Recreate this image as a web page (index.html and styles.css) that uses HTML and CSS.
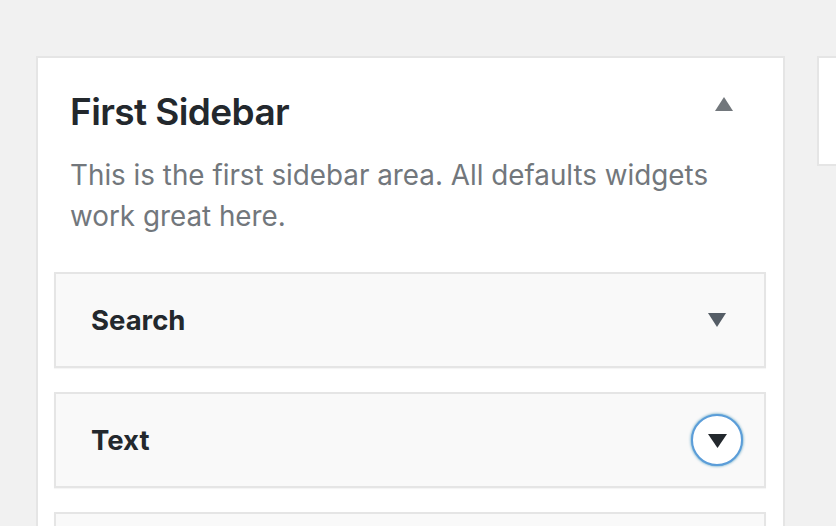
FILE: index.html
```html
<!DOCTYPE html>
<html lang="en">
<head>
    <meta charset="UTF-8">
    <meta name="viewport" content="width=device-width, initial-scale=1.0">
    <title>Widgets</title>
    <link rel="stylesheet" href="styles.css">
</head>
<body>
    <div class="widgets-area">
        <div class="sidebar">
            <div class="sidebar-head">
                <h2 class="sidebar-name">First Sidebar</h2>
                <button type="button" class="sidebar-toggle" aria-label="Collapse">
                    <svg width="18" height="14" viewBox="0 0 18 14"><path d="M9 0 L18 14 L0 14 Z" fill="#72777c"/></svg>
                </button>
            </div>
            <p class="sidebar-desc">This is the first sidebar area. All defaults widgets work great here.</p>

            <div class="widget">
                <h3 class="widget-title">Search</h3>
                <span class="widget-arrow">
                    <svg width="18" height="14" viewBox="0 0 18 14"><path d="M0 0 L18 0 L9 14 Z" fill="#555d66"/></svg>
                </span>
            </div>

            <div class="widget">
                <h3 class="widget-title">Text</h3>
                <button type="button" class="widget-toggle focused" aria-label="Expand">
                    <svg width="19" height="14" viewBox="0 0 19 14"><path d="M0 0 L19 0 L9.5 14 Z" fill="#23282d"/></svg>
                </button>
            </div>

            <div class="widget"></div>
        </div>

        <div class="sidebar sidebar-next"></div>
    </div>
</body>
</html>
```

FILE: styles.css
```css
body {
    font-family: 'Inter', 'Noto Sans', sans-serif;
    background-color: #f1f1f1;
    color: #23282d;
    margin: 0;
    overflow: hidden;
}

.widgets-area {
    display: flex;
    align-items: flex-start;
    gap: 32px;
    padding: 56px 0 0 36px;
}

.sidebar {
    flex: 0 0 749px;
    box-sizing: border-box;
    background: #fff;
    border: 2px solid #e5e5e5;
    padding: 0 17px 0 16px;
    min-height: 600px;
}

.sidebar-next {
    flex: 0 0 200px;
    min-height: 0;
    height: 110px;
}

.sidebar-head {
    display: flex;
    justify-content: space-between;
    align-items: flex-start;
    padding: 26px 0 0 16px;
}

.sidebar-name {
    margin: 4px 0 0;
    font-size: 37px;
    line-height: 48px;
    font-weight: 600;
    letter-spacing: -0.6px;
    color: #23282d;
}

.sidebar-toggle {
    width: 40px;
    height: 40px;
    margin-right: 22px;
    padding: 0;
    border: none;
    background: none;
    display: flex;
    align-items: center;
    justify-content: center;
}

.sidebar-desc {
    margin: 19px 0 35px;
    padding: 0 40px 0 16px;
    font-size: 27.8px;
    line-height: 41px;
    color: #72777c;
}

.widget {
    display: flex;
    align-items: center;
    justify-content: space-between;
    height: 96px;
    box-sizing: border-box;
    background: #f9f9f9;
    border: 2px solid #e5e5e5;
    box-shadow: 0 1px 1px rgba(0,0,0,0.04);
    margin-bottom: 24px;
    padding: 0 21px 0 35px;
}

.widget-title {
    margin: 0;
    font-size: 27.5px;
    font-weight: 700;
    color: #23282d;
}

.widget-arrow {
    display: flex;
    width: 52px;
    justify-content: center;
}

.widget-toggle {
    width: 52px;
    height: 52px;
    padding: 0;
    border-radius: 50%;
    border: 2px solid transparent;
    background: #fff;
    display: flex;
    align-items: center;
    justify-content: center;
}

.widget-toggle svg {
    margin-top: 2px;
}

.widget-toggle.focused {
    border-color: #5b9dd9;
    box-shadow: 0 0 3px rgba(0,115,170,0.8);
}
```
